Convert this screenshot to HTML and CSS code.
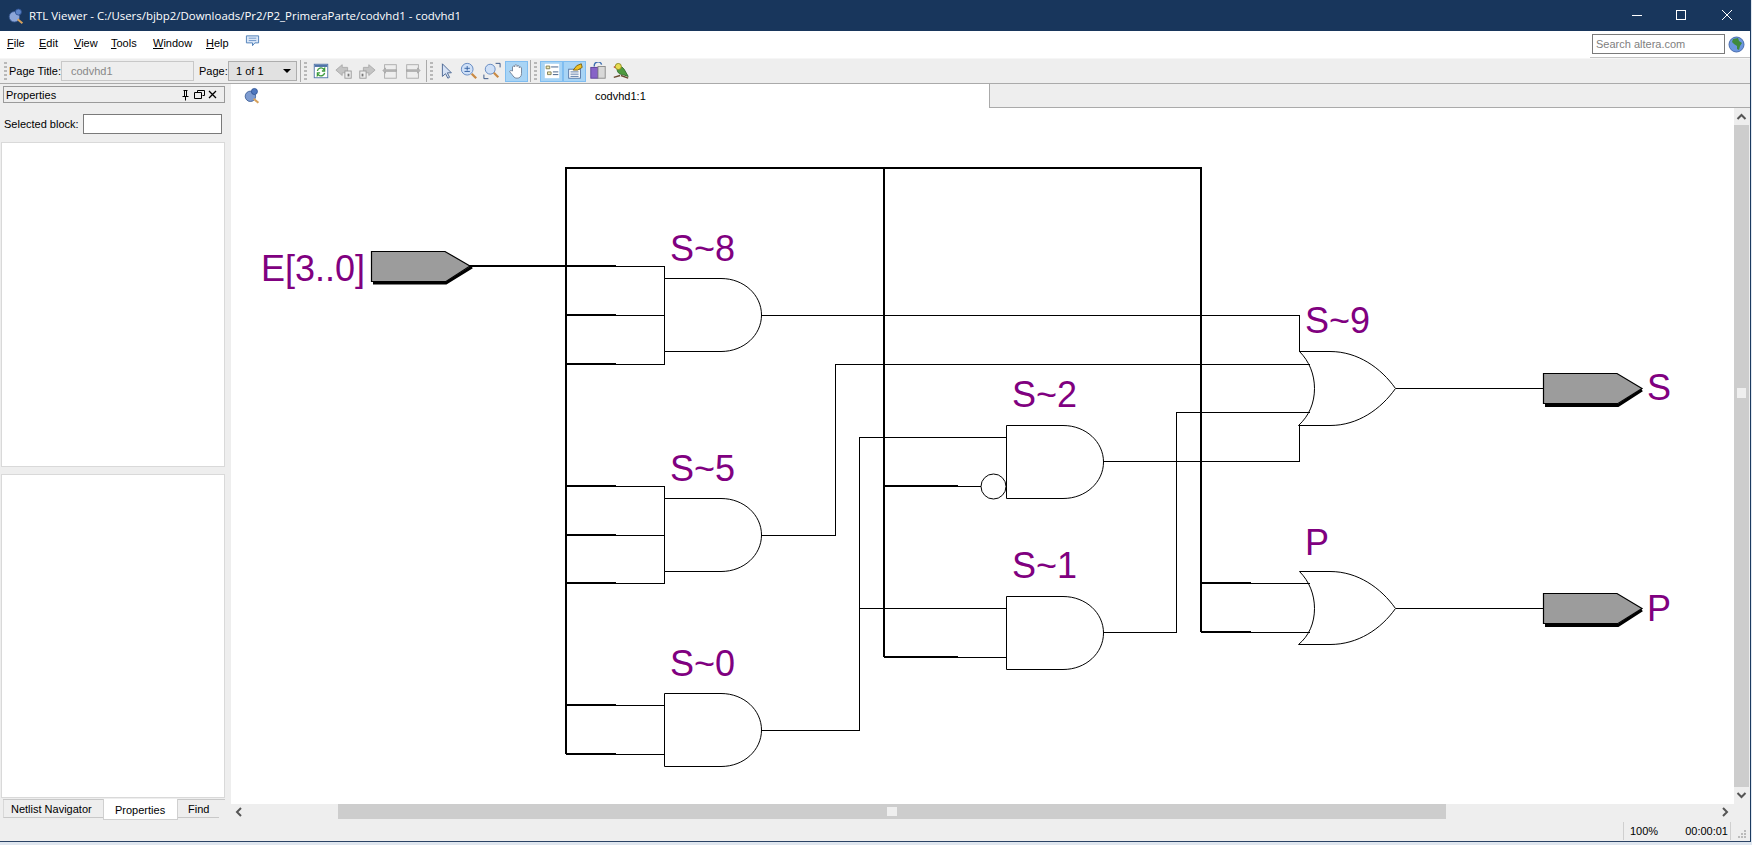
FILE: index.html
```html
<!DOCTYPE html>
<html lang="en">
<head>
<meta charset="utf-8">
<title>RTL Viewer</title>
<link rel="stylesheet" href="styles.css">
</head>
<body>
<div class="window">
  <header class="titlebar">
    <svg class="app-icon" width="16" height="16" viewBox="0 0 20 20"><circle cx="8" cy="11" r="6.500" fill="#8ca6d8" stroke="#34558f"/><circle cx="13" cy="5" r="3.800" fill="#5f86c9" stroke="#2b4f90"/><path d="M12 14l6 5" stroke="#d6a15c" stroke-width="2.600"/></svg>
    <span class="title-text">RTL Viewer - C:/Users/bjbp2/Downloads/Pr2/P2_PrimeraParte/codvhd1 - codvhd1</span>
    <div class="win-controls">
      <svg class="win-btn" width="46" height="31" viewBox="0 0 46 31"><path d="M20 15.500h10" stroke="#fff"/></svg>
      <svg class="win-btn" width="46" height="31" viewBox="0 0 46 31"><rect x="18.500" y="10.500" width="9" height="9" fill="none" stroke="#fff"/></svg>
      <svg class="win-btn" width="46" height="31" viewBox="0 0 46 31"><path d="M18 10l10 10M28 10l-10 10" stroke="#fff"/></svg>
    </div>
  </header>

  <nav class="menubar">
    <span class="menu"><u>F</u>ile</span>
    <span class="menu"><u>E</u>dit</span>
    <span class="menu"><u>V</u>iew</span>
    <span class="menu"><u>T</u>ools</span>
    <span class="menu"><u>W</u>indow</span>
    <span class="menu"><u>H</u>elp</span>
    <svg class="feedback" width="15" height="14" viewBox="0 0 16 14"><path d="M1.500 1.500h13v7.500h-4l-2.500 3v-3h-6.500z" fill="#dbe8f8" stroke="#4f7fb8"/><path d="M4 4h8M4 6.500h8" stroke="#6f95c6"/></svg>
    <div class="search">
      <span class="search-box">Search altera.com</span>
      <svg class="globe" width="17" height="17" viewBox="0 0 17 17"><circle cx="8.500" cy="8.500" r="7.500" fill="#6b96de" stroke="#4a6eb0"/><path d="M5 3l5-1 1 3 3 2-2 3-1 4-2-1v-3l-3-2-2-2z" fill="#3f8a3c"/></svg>
    </div>
  </nav>

  <div class="toolbar">
    <span class="grip"></span>
    <span class="tb-label">Page Title:</span>
    <span class="page-title">codvhd1</span>
    <span class="tb-label page-label">Page:</span>
    <span class="page-select">1 of 1<i class="caret"></i></span>
    <span class="sep"></span><span class="grip"></span>
    <svg class="tb-icon" viewBox="0 0 20 20"><rect x="2.500" y="2.500" width="15" height="15" fill="#fff" stroke="#4f73a8"/><rect x="3" y="3" width="14" height="2.500" fill="#4f73a8"/><path d="M6 10a4 4 0 0 1 7-2l1-1v3h-3M14 12a4 4 0 0 1-7 2l-1 1v-3h3" fill="none" stroke="#3a9a3a" stroke-width="1.500"/></svg>
    <svg class="tb-icon" viewBox="0 0 20 20"><path d="M1 9l7-6v3h6v6H8v3z" fill="#c4c4c4" stroke="#aaa"/><rect x="11" y="10" width="7" height="8" fill="#eee" stroke="#999"/><rect x="14" y="13" width="2" height="3" fill="#777"/></svg>
    <svg class="tb-icon" viewBox="0 0 20 20"><path d="M19 9l-7-6v3H6v6h6v3z" fill="#c4c4c4" stroke="#aaa"/><rect x="2" y="10" width="7" height="8" fill="#eee" stroke="#999"/><rect x="4" y="13" width="2" height="3" fill="#777"/></svg>
    <svg class="tb-icon" viewBox="0 0 20 20"><rect x="4" y="3" width="13" height="15" fill="#eee" stroke="#aaa"/><path d="M2 9.500l3-3v2h12v2H5v2z" fill="#b5b5b5" stroke="#999" stroke-width=".6"/></svg>
    <svg class="tb-icon" viewBox="0 0 20 20"><rect x="3" y="3" width="13" height="15" fill="#eee" stroke="#aaa"/><path d="M18 9.500l-3-3v2H3v2h12v2z" fill="#b5b5b5" stroke="#999" stroke-width=".6"/></svg>
    <span class="sep sep-near"></span><span class="grip"></span>
    <svg class="tb-icon" viewBox="0 0 20 20"><path d="M6 2v14l3.500-3 2.500 5 2-1-2.500-5h4.500z" fill="#d6e2f5" stroke="#45628f"/></svg>
    <svg class="tb-icon" viewBox="0 0 20 20"><circle cx="8" cy="8" r="6.500" fill="#cfe0f7" stroke="#5d83bd"/><path d="M5 7h6M8 4.500v5M5 10.500h6" stroke="#2f5da0"/><path d="M13 13l5 5" stroke="#c98a45" stroke-width="2.500"/></svg>
    <svg class="tb-icon" viewBox="0 0 20 20"><path d="M14 1.500h5V6M1 14v4.500h5" fill="none" stroke="#2f4d80"/><circle cx="8" cy="8" r="5.500" fill="#cfe0f7" stroke="#5d83bd"/><path d="M12 12l5 5" stroke="#c98a45" stroke-width="2.500"/></svg>
    <span class="tb-on tb-hand"><svg class="tb-icon" viewBox="0 0 20 20"><path d="M5 10V5.500a1.300 1.300 0 0 1 2.500 0V4a1.300 1.300 0 0 1 2.500 0v1a1.300 1.300 0 0 1 2.500 0v1.500a1.300 1.300 0 0 1 2.500 0V13c0 3-2 5-5 5s-4-2-5.500-4L2 11c-.5-1.500 1.500-2 2.500-1z" fill="#fff" stroke="#6f7f95"/></svg></span>
    <span class="sep sep-hand"></span><span class="grip"></span>
    <span class="tb-on tb-first"><svg class="tb-icon" viewBox="0 0 20 20"><rect x="2" y="2" width="16" height="16" fill="#fff"/><path d="M3.500 4.500h4v3h-4zM5 11h4v3H5z" fill="#f3e9b5" stroke="#7b7b50"/><path d="M9 5.500h8M11 11h6M11 14h6" stroke="#35557f"/></svg></span>
    <span class="tb-on"><svg class="tb-icon" viewBox="0 0 20 20"><rect x="3" y="8" width="13" height="10" fill="#fff" stroke="#4f6f9f"/><path d="M5 11h9M5 13.500h9M5 16h9" stroke="#4f6f9f"/><path d="M8 9l4-5 5-2 1 4-5 3z" fill="#f0c020" stroke="#7a6010"/></svg></span>
    <svg class="tb-icon" viewBox="0 0 20 20"><rect x="2" y="6" width="8" height="12" fill="#8763c7" stroke="#5a3d96"/><rect x="10" y="5" width="8" height="13" fill="#d8d8d8" stroke="#888"/><path d="M6 5a4 4 0 0 1 8-2" fill="none" stroke="#3f6fb0" stroke-width="1.500"/></svg>
    <svg class="tb-icon" viewBox="0 0 20 20"><path d="M6 7c2-3 6-2 8 2l4 7-6-2c-4 0-7-3-6-7z" fill="#4f9a3f" stroke="#2f6a2a"/><circle cx="7" cy="5" r="3.400" fill="#e8dc50" stroke="#8a8a20"/><path d="M3.500 4.500l-2 1 2 1.500z" fill="#c83a2a"/><path d="M2 17l7-2M10 15l8 3" stroke="#6a4a30" stroke-width="1.500"/></svg>
  </div>

  <div class="workspace">
    <aside class="dock">
      <div class="dock-head">
        <span>Properties</span>
        <svg class="dock-icons" width="42" height="12" viewBox="0 0 42 12"><path d="M3.500 1.500h4M4.500 1.500v6M6.500 1.500v6M2.500 7.500h6M5.500 7.500v4" fill="none" stroke="#000"/><path d="M17.500 3.500v-2h7v5h-2M14.500 3.500h7v6h-7z" fill="none" stroke="#000"/><path d="M29 2l7 7M36 2l-7 7" stroke="#000" stroke-width="1.300"/></svg>
      </div>
      <div class="selected-row"><span>Selected block:</span><span class="selected-box"></span></div>
      <div class="pane"></div>
      <div class="pane"></div>
      <div class="dock-tabs">
        <span class="dock-tab tab-netlist">Netlist Navigator</span>
        <span class="dock-tab tab-props">Properties</span>
        <span class="dock-tab tab-find">Find</span>
      </div>
    </aside>

    <main class="viewer">
      <div class="tabstrip">
        <span class="tab-icon"><svg width="16" height="17" viewBox="0 0 20 20"><circle cx="8" cy="11" r="6.500" fill="#7d9bd0" stroke="#34558f"/><circle cx="13" cy="5" r="3.800" fill="#4f78c0" stroke="#2b4f90"/><path d="M12 14l6 5" stroke="#d6a15c" stroke-width="2.600"/></svg></span>
        <span class="tab">codvhd1:1</span>
      </div>
      <div class="canvas-row">
        <svg class="schematic" width="1503" height="696" viewBox="231 108 1503 696">
          <g class="bus">
            <path d="M566 754V168H1201V632M884 168V657"/>
            <path d="M422 266H616M566 315H616M566 364H616M566 486H616M566 535H616M566 583H616M566 705H616M566 754H616"/>
            <path d="M884 486H958M884 657H958M1201 583H1251M1201 632H1251"/>
          </g>
          <g class="wire">
            <path d="M616 266.500H664.500V364.500H616M616 315.500H664.500"/>
            <path d="M616 486.500H664.500V583.500H616M616 535.500H664.500"/>
            <path d="M616 705.500H664M616 754.500H664"/>
            <path d="M958 486.500H981M958 657.500H1006"/>
            <path d="M1251 583.500H1310M1251 632.500H1310"/>
            <path d="M761 315.500H1299.500V352"/>
            <path d="M761 535.500H835.500V364.500H1310"/>
            <path d="M761 730.500H859.500V437.500H1006M859.500 608.500H1006"/>
            <path d="M1103 461.500H1299.500V425"/>
            <path d="M1103 632.500H1176.500V412.500H1310"/>
            <path d="M1396 388.500H1544M1396 608.500H1544"/>
          </g>
          <g class="gate">
            <path d="M664.500 278.500H721C744 278.500 761.500 295 761.500 315S744 351.500 721 351.500H664.500z"/>
            <path d="M664.500 498.500H721C744 498.500 761.500 515 761.500 535S744 571.500 721 571.500H664.500z"/>
            <path d="M664.500 693.500H721C744 693.500 761.500 710 761.500 730S744 766.500 721 766.500H664.500z"/>
            <path d="M1006.500 425.500H1063C1086 425.500 1103.500 442 1103.500 462S1086 498.500 1063 498.500H1006.500z"/>
            <path d="M1006.500 596.500H1063C1086 596.500 1103.500 613 1103.500 633S1086 669.500 1063 669.500H1006.500z"/>
            <circle cx="993.500" cy="486.500" r="12.500"/>
            <path class="or" d="M1299.500 351.500H1330C1358 351.500 1381 368 1395.500 388.500C1381 409 1358 425.500 1330 425.500H1298.500C1309 416 1314.500 403 1314.500 388.500S1309 361 1299.500 351.500z"/>
            <path class="or" d="M1299.500 571.500H1330C1358 571.500 1381 588 1395.500 608.500C1381 629 1358 644.500 1330 644.500H1298.500C1309 636 1314.500 623 1314.500 608.500S1309 581 1299.500 571.500z"/>
          </g>
          <g class="wire">
            <path d="M1299 364.500H1310M1299 412.500H1310M1299 583.500H1310M1299 632.500H1310"/>
          </g>
          <g class="port">
            <path class="port-shadow" d="M373 283H446L472 267"/>
            <path d="M371.500 251.500H445L470 266L446 281.500H371.500z"/>
            <path class="port-shadow" d="M1545 405.500H1618L1642 390"/>
            <path d="M1543.500 373.500H1617L1642 388.500L1618 403.500H1543.500z"/>
            <path class="port-shadow" d="M1545 625.500H1618L1642 610"/>
            <path d="M1543.500 593.500H1617L1642 608.500L1618 623.500H1543.500z"/>
          </g>
          <g class="labels">
            <text x="261" y="281">E[3..0]</text>
            <text x="670" y="261">S~8</text>
            <text x="670" y="481">S~5</text>
            <text x="670" y="676">S~0</text>
            <text x="1012" y="407">S~2</text>
            <text x="1012" y="578">S~1</text>
            <text x="1305" y="333">S~9</text>
            <text x="1305" y="555">P</text>
            <text x="1647" y="400">S</text>
            <text x="1647" y="621">P</text>
          </g>
        </svg>
        <div class="vscroll">
          <svg width="15" height="17" viewBox="0 0 15 17"><path d="M3.500 11l4-4 4 4" fill="none" stroke="#555" stroke-width="2"/></svg>
          <div class="v-thumb"><span class="grip-v"></span></div>
          <svg width="15" height="17" viewBox="0 0 15 17"><path d="M3.500 6l4 4 4-4" fill="none" stroke="#555" stroke-width="2"/></svg>
        </div>
      </div>
      <div class="hscroll">
        <svg class="h-arrow" width="16" height="14" viewBox="0 0 16 14"><path d="M10 3L6 7l4 4" fill="none" stroke="#555" stroke-width="2"/></svg>
        <div class="h-track"><div class="h-thumb"><span class="grip-h"></span></div></div>
        <svg class="h-arrow" width="16" height="14" viewBox="0 0 16 14"><path d="M5 3l4 4-4 4" fill="none" stroke="#555" stroke-width="2"/></svg>
      </div>
      <footer class="status">
        <span class="status-cell"><span>100%</span><span>00:00:01</span></span>
        <svg class="size-grip" width="10" height="10" viewBox="0 0 10 10"><path d="M7 0h2v2H7zM4 3h2v2H4zM7 3h2v2H7zM1 6h2v2H1zM4 6h2v2H4zM7 6h2v2H7z" fill="#bbb"/></svg>
      </footer>
    </main>
  </div>
</div>
</body>
</html>
```
FILE: styles.css
```css
* { box-sizing: border-box; }
html, body { margin: 0; height: 100%; overflow: hidden; }
body { font-family: "Liberation Sans", Arial, sans-serif; font-size: 11px; color: #000; background: #dfe6ef; }
.window { width: 1751px; height: 842px; display: flex; flex-direction: column; background: #eeeeee; border-bottom: 1px solid #2b4365; border-right: 1px solid #1a3a60; }
.titlebar { height: 31px; flex: none; background: #18365c; color: #fff; display: flex; align-items: center; padding-left: 8px; }
.app-icon { margin-right: 5px; }
.title-text { flex: 1; font-family: "Open Sans", "Liberation Sans", sans-serif; font-size: 11.44px; }
.win-controls { display: flex; }
.win-btn { display: block; }

.menubar { height: 27px; flex: none; background: #fff; display: flex; align-items: flex-start; padding: 3px 0 0 7px; }
.menu { font-size: 11px; line-height: 18px; }
.menu:nth-of-type(1) { width: 32px; }
.menu:nth-of-type(2) { width: 35px; }
.menu:nth-of-type(3) { width: 37px; }
.menu:nth-of-type(4) { width: 42px; }
.menu:nth-of-type(5) { width: 53px; }
.menu:nth-of-type(6) { width: 39px; }
.search { margin-left: auto; height: 24px; display: flex; align-items: flex-start; padding: 0 5px 0 2px; border-bottom: 1px solid #c4c4c4; }
.search-box { width: 133px; height: 20px; border: 1px solid #7a7a7a; color: #808080; font-size: 11px; padding: 3px; background: #fff; }
.globe { margin: 2px 0 0 3px; }

.toolbar { height: 26px; flex: none; display: flex; align-items: center; padding-left: 1px; border-bottom: 1px solid #aaa; border-top: 1px solid #f6f6f6; }
.grip { width: 3px; height: 18px; flex: none; margin: 0 2px 0 3px; background: repeating-linear-gradient(to bottom, #b8b8b8 0 2px, transparent 2px 4px); }
.tb-label { width: 50px; flex: none; margin: 0 2px 0 0; white-space: nowrap; }
.page-title { width: 133px; height: 20px; flex: none; border: 1px solid #c8c8c8; color: #888; padding: 3px 9px; background: #eeeeee; }
.page-label { width: 27px; margin: 0 2px 0 5px; }
.page-select { width: 69px; height: 20px; flex: none; display: flex; align-items: center; justify-content: space-between; padding: 0 5px 0 7px; background: #e1e1e1; border: 1px solid #adadad; }
.caret { width: 0; height: 0; border: 4px solid transparent; border-top: 4px solid #000; border-bottom: 0; }
.sep { width: 1px; height: 22px; flex: none; background: #aaa; margin-left: 3px; }
.sep-near { margin-left: 1.500px; }
.sep-hand { margin-left: 2px; }
.tb-icon { width: 18px; height: 18px; display: block; margin: 0 2.500px; flex: none; }
.tb-on { width: 23px; height: 21px; flex: none; display: flex; align-items: center; justify-content: center; background: #a8d4f5; border: 1px solid #80bdf0; }
.tb-on .tb-icon { margin: 0; }
.tb-hand { margin-left: 1.500px; }
.tb-first { margin-left: 1px; }

.workspace { flex: 1; min-height: 0; display: flex; }
.dock { width: 231px; flex: none; display: flex; flex-direction: column; padding: 2px 6px 0 1px; }
.dock-head { height: 17px; flex: none; margin-left: 2px; border: 1px solid #9a9a9a; display: flex; align-items: center; justify-content: space-between; padding: 0 2px 0 2px; }
.selected-row { height: 39px; flex: none; display: flex; align-items: center; gap: 4px; padding: 3px 0 0 3px; }
.selected-box { width: 139px; height: 20px; border: 1px solid #7a7a7a; background: #fff; }
.pane { flex: 1; background: #fff; border: 1px solid #d9d9d9; margin-bottom: 7px; }
.pane + .dock-tabs { margin-top: -6px; }
.dock-tabs { height: 20px; flex: none; display: flex; margin: 0 0 22px 2px; border-top: 1px solid #c8c8c8; }
.dock-tab { height: 18px; padding: 3px 0 0 7px; border-bottom: 1px solid #c8c8c8; border-left: 1px solid #d8d8d8; }
.tab-netlist { width: 100px; }
.tab-props { width: 75px; height: 21px; margin-top: -1px; padding: 5px 0 0 11px; background: #fff; border: 1px solid #d0d0d0; border-top: 0; }
.tab-find { width: 41px; padding-left: 10px; border-left: 0; }

.viewer { flex: 1; min-width: 0; display: flex; flex-direction: column; }
.tabstrip { height: 24px; flex: none; display: flex; background: #eeeeee; border-bottom: 1px solid #aaa; }
.tab-icon { width: 60px; height: 24px; background: #fff; display: block; padding: 3px 0 0 13px; }
.tab { width: 699px; height: 24px; background: #fff; padding: 6px 0 0 304px; border-right: 1px solid #aaa; }
.canvas-row { height: 696px; flex: none; display: flex; }
.schematic { display: block; background: #fff; flex: none; }
.bus path { fill: none; stroke: #000; stroke-width: 2; shape-rendering: crispEdges; }
.wire path { fill: none; stroke: #000; stroke-width: 1; shape-rendering: crispEdges; }
.gate path, .gate circle { fill: #fff; stroke: #000; stroke-width: 1; }
.port path { fill: #9c9c9c; stroke: #000; stroke-width: 1.200; }
.port .port-shadow { fill: none; stroke-width: 3; }
.labels text { fill: #800080; font-family: "Liberation Sans", Arial, sans-serif; font-size: 36px; }

.vscroll { width: 15px; flex: none; display: flex; flex-direction: column; background: #eee; }
.vscroll svg { display: block; flex: none; }
.v-thumb { flex: 1; background: #cdcdcd; display: flex; align-items: flex-start; justify-content: center; padding-top: 263px; }
.grip-v { width: 9px; height: 10px; background: #efefef; }
.hscroll { height: 16px; flex: none; display: flex; align-items: flex-start; }
.h-arrow { margin-top: 1px; flex: none; }
.h-track { flex: 1; height: 15px; padding: 0 272px 0 91px; }
.h-thumb { height: 100%; background: #cdcdcd; display: flex; align-items: center; justify-content: center; }
.grip-h { width: 10px; height: 9px; background: #efefef; }
.hscroll .h-arrow:last-child { margin-right: 16px; }
.status { height: 21px; flex: none; display: flex; justify-content: flex-end; align-items: center; }
.status-cell { width: 108px; height: 18px; display: flex; align-items: center; justify-content: space-between; padding: 0 2px 0 6px; border-left: 1px solid #cfcfcf; border-right: 1px solid #cfcfcf; }
.size-grip { margin: 8px 3px 0 6px; flex: none; }
```
